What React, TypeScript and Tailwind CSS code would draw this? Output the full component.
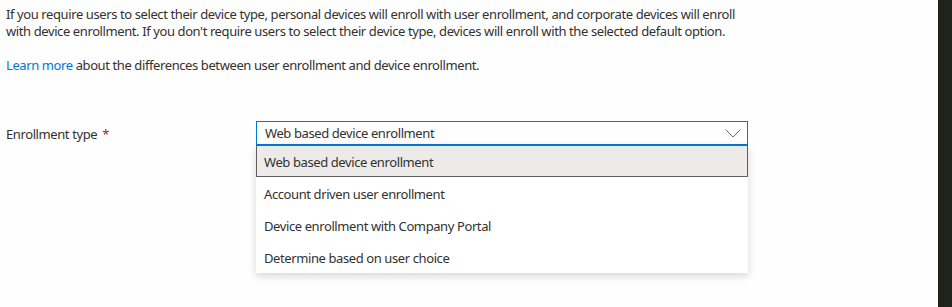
const OPTIONS = [
  "Web based device enrollment",
  "Account driven user enrollment",
  "Device enrollment with Company Portal",
  "Determine based on user choice",
];

export default function App() {
  const selected = OPTIONS[0];
  return (
    <div className="flex h-[307px] w-[952px] bg-white font-['Noto_Sans',sans-serif] text-[13px] tracking-[-0.4px] text-[#323130]">
      <div className="flex-1 bg-[#fefefe] pl-[6px] pt-[6px]">
        <p className="w-[745px] leading-[17px]">
          If you require users to select their device type, personal devices will enroll with user enrollment, and
          corporate devices will enroll with device enrollment. If you don't require users to select their device
          type, devices will enroll with the selected default option.
        </p>
        <p className="mt-[17px] leading-[17px]">
          <a className="text-[#0078d4]">Learn more</a> about the differences between user enrollment and device
          enrollment.
        </p>

        <div className="mt-[47px] flex items-start">
          <label className="w-[250px] pt-[5px] leading-[17px]">
            Enrollment type <span className="ml-[2px] text-[#a4262c]">*</span>
          </label>
          <div className="w-[492px]">
            <div className="flex h-[24px] items-center justify-between border border-[#0078d4] pl-[8px] pr-[6px]">
              <span className="pt-[2px]">{selected}</span>
              <svg width="16" height="9" viewBox="0 0 16 9" fill="none" className="text-[#605e5c]">
                <polyline points="0.5,0.5 8,8 15.5,0.5" stroke="currentColor" strokeWidth="0.9" />
              </svg>
            </div>
            <ul className="bg-white shadow-[0_3px_8px_rgba(0,0,0,0.16)]">
              {OPTIONS.map((opt) => (
                <li
                  key={opt}
                  className={
                    opt === selected
                      ? "flex h-[32px] items-center border border-[#605e5c] bg-[#edebe9] pl-[7px] pt-[3px]"
                      : "flex h-[32px] items-center pl-[8px] pt-[3px]"
                  }
                >
                  {opt}
                </li>
              ))}
            </ul>
          </div>
        </div>
      </div>
      <div className="w-[14px] bg-[#20221c]" />
    </div>
  );
}
